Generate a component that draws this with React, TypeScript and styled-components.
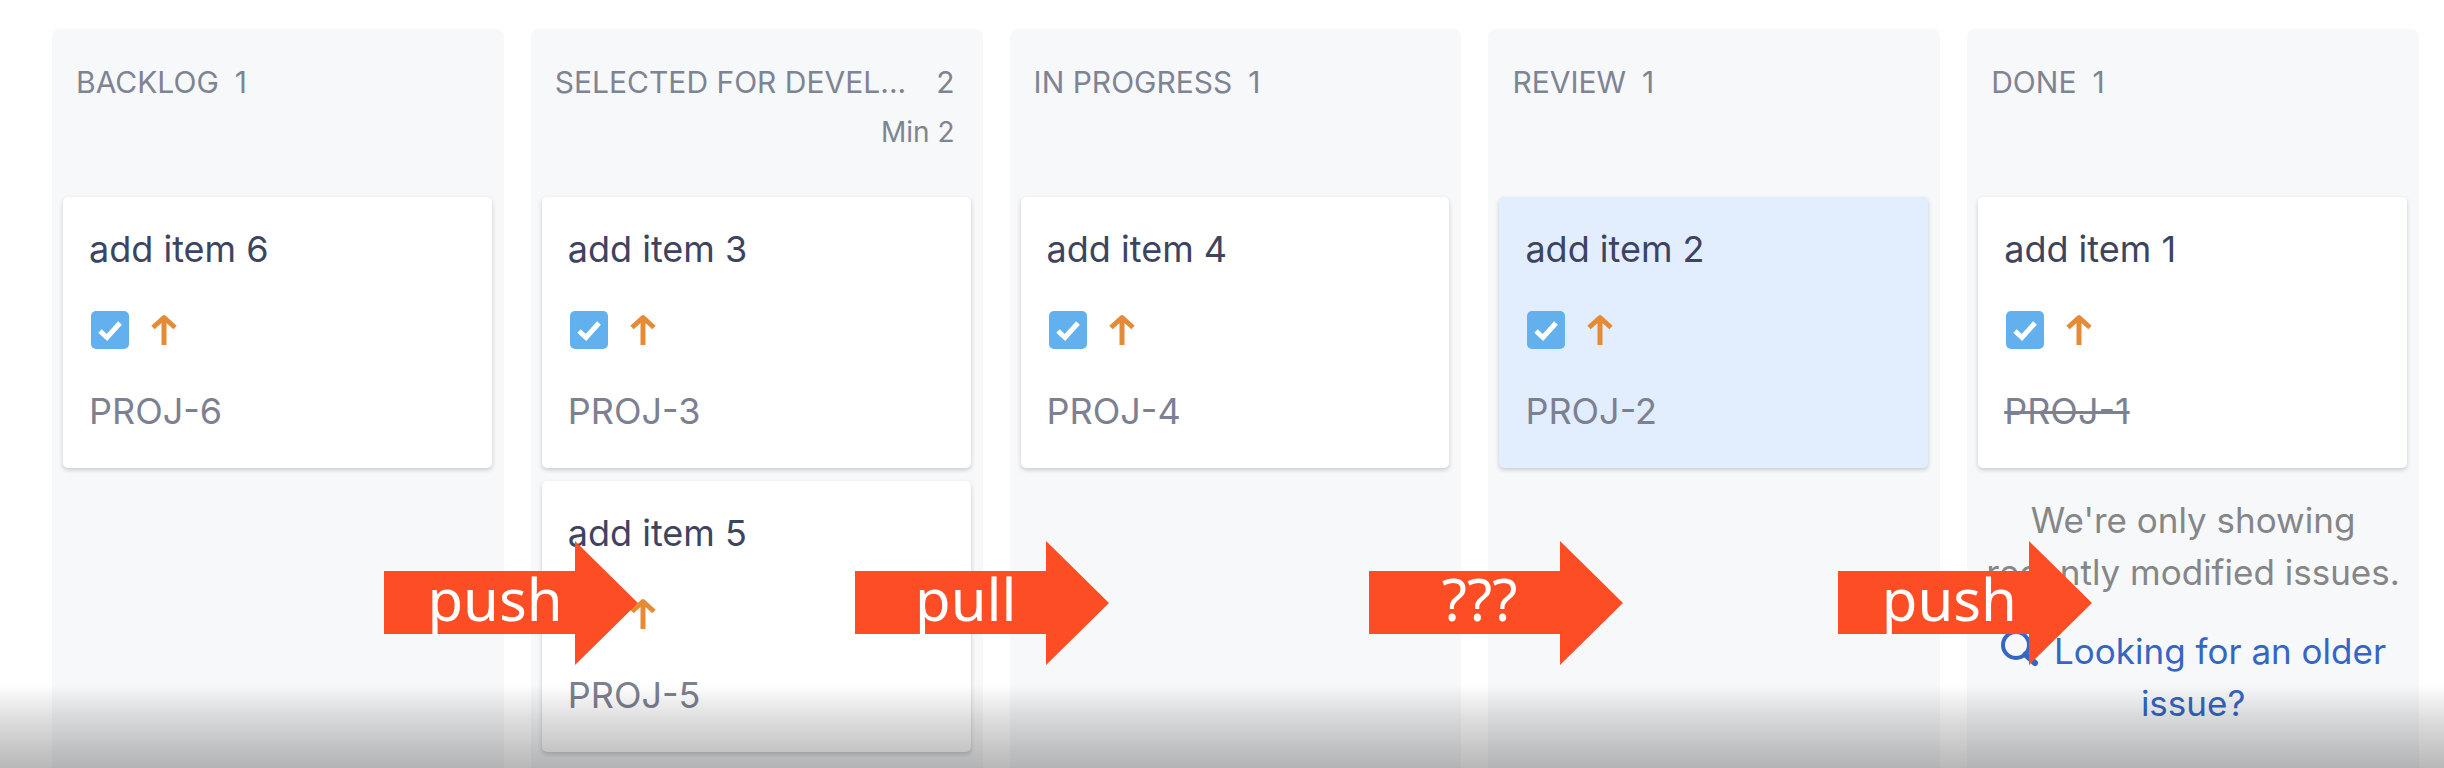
import React from "react";
import styled, { createGlobalStyle } from "styled-components";

const GlobalStyle = createGlobalStyle`
  *, *::before, *::after { box-sizing: border-box; }
  body {
    margin: 0;
    background: #ffffff;
    font-family: Inter, "Liberation Sans", sans-serif;
    -webkit-font-smoothing: antialiased;
  }
  h2, h3, p { margin: 0; font-weight: 400; }
`;

const Board = styled.main`
  display: grid;
  grid-template-columns: repeat(5, minmax(0, 1fr));
  gap: 27px;
  min-height: 100vh;
  padding: 29px 25px 0 52px;
`;

const Column = styled.section`
  position: relative;
  display: flex;
  flex-direction: column;
  border-radius: 8px 8px 0 0;
  background: #f6f8fa;
`;

const ColumnHeader = styled.header`
  display: flex;
  flex-direction: column;
  height: 168px;
  padding: 28px 28px 0 24px;
  color: #7e8492;
`;

const TitleRow = styled.div<{ $spread: boolean }>`
  display: flex;
  justify-content: ${(p) => (p.$spread ? "space-between" : "flex-start")};
  gap: 16px;
  font-size: 30px;
  line-height: 50px;
`;

const ColumnTitle = styled.h2`
  white-space: nowrap;
  font-size: 30px;
  line-height: 50px;
`;

const Count = styled.span`
  flex: none;
`;

const Limit = styled.p`
  align-self: flex-end;
  font-size: 28px;
  line-height: 50px;
`;

const Cards = styled.div`
  display: flex;
  flex-direction: column;
  gap: 13px;
  padding: 0 12px 0 11px;
`;

const Card = styled.article<{ $selected?: boolean }>`
  display: flex;
  flex-direction: column;
  gap: 30px;
  height: 271px;
  padding: 26px;
  border-radius: 5px;
  background: ${(p) => (p.$selected ? "#e2eefd" : "#ffffff")};
  box-shadow: 0 2px 4px rgba(40, 48, 60, 0.22);
`;

const CardTitle = styled.h3`
  color: #3d4460;
  font-size: 36px;
  line-height: 52px;
`;

const Icons = styled.div`
  display: flex;
  align-items: center;
  gap: 18px;
  height: 50px;
  padding-left: 2px;
`;

const Key = styled.p<{ $done?: boolean }>`
  color: #7c8090;
  font-size: 36px;
  line-height: 52px;
  text-decoration: ${(p) => (p.$done ? "line-through" : "none")};
  text-decoration-thickness: 3px;
`;

const Note = styled.div`
  display: flex;
  flex-direction: column;
  gap: 27px;
  padding: 26px 16px 0;
  color: #858687;
  font-size: 35px;
  line-height: 52px;
  text-align: center;
`;

const OlderLink = styled.a`
  color: #3566c3;
  text-decoration: none;

  svg {
    margin-right: 14px;
    vertical-align: -4px;
  }
`;

const FlowArrow = styled.div<{ $left: number }>`
  position: absolute;
  z-index: 1;
  top: 512px;
  left: ${(p) => p.$left}px;
  display: flex;
  align-items: center;
  justify-content: center;
  width: 254px;
  height: 124px;
  padding: 0 32px 8px 0;
  color: #ffffff;
  font-family: "Noto Sans", "DejaVu Sans", sans-serif;
  font-size: 58px;
  line-height: 64px;

  svg {
    position: absolute;
    inset: 0;
    z-index: -1;
  }
`;

const Fade = styled.div`
  position: fixed;
  z-index: 2;
  right: 0;
  bottom: 0;
  left: 0;
  height: 84px;
  background: linear-gradient(to bottom, rgba(0, 0, 0, 0), rgba(0, 0, 0, 0.14) 45%, rgba(0, 0, 0, 0.28));
  pointer-events: none;
`;

const TaskIcon = () => (
  <svg width="38" height="38" viewBox="0 0 38 38" role="img" aria-label="Task">
    <rect width="38" height="38" rx="5" fill="#63b0ee" />
    <path d="M9 20l7 6.500L29 12" fill="none" stroke="#fff" strokeWidth="5" />
  </svg>
);

const PriorityIcon = () => (
  <svg width="34" height="38" viewBox="0 0 34 38" role="img" aria-label="Medium priority">
    <path d="M17 34V7M6 16.500L17 6.500L28 16.500" fill="none" stroke="#e58a35" strokeWidth="5" strokeLinejoin="round" />
  </svg>
);

const SearchIcon = () => (
  <svg width="40" height="38" viewBox="0 0 40 38" aria-hidden="true">
    <circle cx="16" cy="15" r="13" fill="none" stroke="#3566c3" strokeWidth="4" />
    <path d="M25.500 24.500l9.500 8.500" stroke="#3566c3" strokeWidth="6" strokeLinecap="round" />
  </svg>
);

type Issue = { title: string; id: string; selected?: boolean; done?: boolean };
type ColumnData = {
  title: string;
  count: number;
  limit?: string;
  issues: Issue[];
  arrow?: { label: string; left: number };
  trimmed?: boolean;
};

const columns: ColumnData[] = [
  { title: "BACKLOG", count: 1, issues: [{ title: "add item 6", id: "PROJ-6" }], arrow: { label: "push", left: 332 } },
  {
    title: "SELECTED FOR DEVEL...",
    count: 2,
    limit: "Min 2",
    issues: [
      { title: "add item 3", id: "PROJ-3" },
      { title: "add item 5", id: "PROJ-5" },
    ],
    arrow: { label: "pull", left: 324 },
  },
  { title: "IN PROGRESS", count: 1, issues: [{ title: "add item 4", id: "PROJ-4" }], arrow: { label: "???", left: 359 } },
  {
    title: "REVIEW",
    count: 1,
    issues: [{ title: "add item 2", id: "PROJ-2", selected: true }],
    arrow: { label: "push", left: 350 },
  },
  { title: "DONE", count: 1, issues: [{ title: "add item 1", id: "PROJ-1", done: true }], trimmed: true },
];

export default function App() {
  return (
    <>
      <GlobalStyle />
      <Board>
        {columns.map((column) => (
          <Column key={column.title}>
            <ColumnHeader>
              <TitleRow $spread={Boolean(column.limit)}>
                <ColumnTitle>{column.title}</ColumnTitle>
                <Count>{column.count}</Count>
              </TitleRow>
              {column.limit && <Limit>{column.limit}</Limit>}
            </ColumnHeader>
            <Cards>
              {column.issues.map((issue) => (
                <Card key={issue.id} $selected={issue.selected}>
                  <CardTitle>{issue.title}</CardTitle>
                  <Icons>
                    <TaskIcon />
                    <PriorityIcon />
                  </Icons>
                  <Key $done={issue.done}>{issue.id}</Key>
                </Card>
              ))}
            </Cards>
            {column.trimmed && (
              <Note>
                <p>We're only showing recently modified issues.</p>
                <OlderLink href="#older">
                  <SearchIcon />
                  Looking for an older issue?
                </OlderLink>
              </Note>
            )}
            {column.arrow && (
              <FlowArrow $left={column.arrow.left}>
                <svg width="254" height="124" viewBox="0 0 254 124" aria-hidden="true">
                  <path d="M0 30H191V0L254 62L191 124V93H0Z" fill="#fd4d24" />
                </svg>
                {column.arrow.label}
              </FlowArrow>
            )}
          </Column>
        ))}
      </Board>
      <Fade />
    </>
  );
}
